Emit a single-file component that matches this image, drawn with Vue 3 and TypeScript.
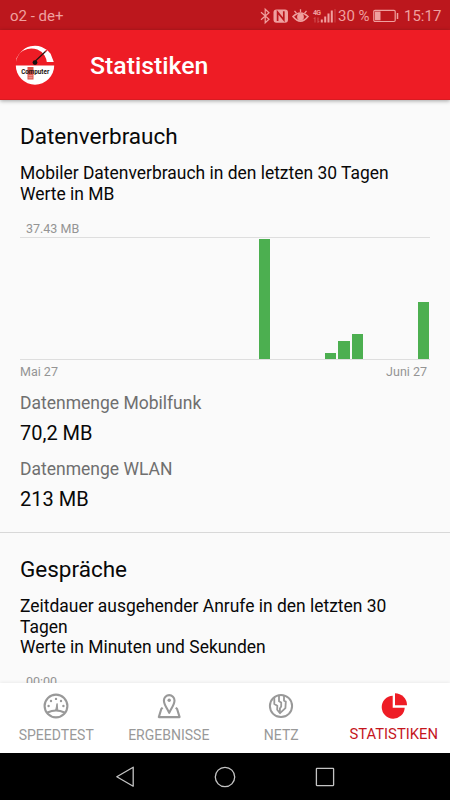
<script setup lang="ts">
interface Metric {
  label: string
  value: string
}

interface Tab {
  id: string
  label: string
  active?: boolean
}

const dayCount = 31
const usage: Record<number, number> = { 18: 120, 23: 5.7, 24: 18, 25: 24.6, 30: 56.7 }
const bars: number[] = Array.from({ length: dayCount }, (_, day) => usage[day] ?? 0)

const metrics: Metric[] = [
  { label: 'Datenmenge Mobilfunk', value: '70,2 MB' },
  { label: 'Datenmenge WLAN', value: '213 MB' },
]

const tabs: Tab[] = [
  { id: 'speed', label: 'SPEEDTEST' },
  { id: 'results', label: 'ERGEBNISSE' },
  { id: 'net', label: 'NETZ' },
  { id: 'stats', label: 'STATISTIKEN', active: true },
]
</script>

<template>
  <div class="screen">
    <div class="status">
      <span class="carrier">o2 - de+</span>
      <svg class="status-icons" width="76" height="18" viewBox="0 0 76 18">
        <path d="M1 5.2 9 12.2 5.2 15.8V2.2L9 5.8 1 12.8" fill="none" stroke="currentColor" stroke-width="1.2" />
        <rect x="13.5" y="2.5" width="14.5" height="13.2" rx="3" fill="currentColor" />
        <path d="M17.6 14V5.2L23.8 12.8V4.2" fill="none" stroke="#bc171d" stroke-width="1.7" />
        <path d="M33 9.5Q40.5 2.5 48 9.5Q40.5 18.8 33 9.5Z" fill="none" stroke="currentColor" stroke-width="1.6" />
        <circle cx="40.5" cy="10" r="3.4" fill="currentColor" />
        <path d="M34.5 3.9 36.5 6.4M40.5 2.2v3M46.5 3.9 44.5 6.4" stroke="currentColor" stroke-width="1.3" />
        <text x="53" y="7.5" font-size="7" font-weight="700" fill="currentColor" textLength="8">4G</text>
        <path d="M55 15.5V10.5M53.8 12l1.2-1.5M58 10.5v5M59.2 14 58 15.5" stroke="currentColor" stroke-width=".9" opacity=".5" />
        <path d="M61.8 15.5v-3M65.2 15.5V9.5M68.5 15.5V6.5M71.8 15.5V3.5" stroke="currentColor" stroke-width="2" />
        <path d="M75 15.5V2" stroke="currentColor" stroke-width="1.6" opacity=".22" />
      </svg>
      <span class="percent">30 %</span>
      <svg class="battery" width="26" height="14" viewBox="0 0 26 14">
        <rect x=".8" y="1.3" width="21.4" height="11.2" rx="1.2" fill="none" stroke="currentColor" stroke-width="1.2" />
        <rect x="2" y="2.5" width="5.5" height="8.8" fill="currentColor" />
        <path d="M24.5 4v6" stroke="currentColor" stroke-width="1.5" />
      </svg>
      <span class="clock">15:17</span>
    </div>

    <header class="toolbar">
      <svg class="logo" width="40" height="42" viewBox="0 0 40 42">
        <path d="M1 19A19.2 19.2 0 0 1 35.6 10.8L38.8 19H31.8Q31.6 16.2 29.6 12.6A15.2 13.5 0 0 0 1 19Z" fill="#fff" />
        <path d="M.8 22.5H39.2A19.2 19.2 0 0 1 .8 22.5Z" fill="#fff" />
        <path d="M19.3 19 31 8" stroke="#24130f" stroke-width="1.2" />
        <path d="m30.4 8.6 3.6-3.4" stroke="#ee1c25" stroke-width="1.1" />
        <circle cx="20" cy="19.6" r="2.4" fill="#17110f" />
        <rect x="12.5" y="24" width="6" height="12.5" fill="#dd5148" />
        <text x="6.2" y="30.6" font-size="7.4" font-weight="700" fill="#17110f" textLength="28" lengthAdjust="spacingAndGlyphs">Computer</text>
        <path d="M13.4 32.8h4.2M13.4 34.8h4.2" stroke="#fff" stroke-width=".8" opacity=".65" />
      </svg>
      <h1>Statistiken</h1>
    </header>

    <main class="content">
      <section class="section">
        <h2>Datenverbrauch</h2>
        <p>Mobiler Datenverbrauch in den letzten 30 Tagen<br />Werte in MB</p>
        <div class="maximum">37.43 MB</div>
        <div class="chart">
          <div v-for="(height, day) in bars" :key="day" class="bar" :style="{ height: height + 'px' }"></div>
        </div>
        <div class="range"><span>Mai 27</span><span>Juni 27</span></div>
        <dl>
          <template v-for="metric in metrics" :key="metric.label">
            <dt>{{ metric.label }}</dt>
            <dd>{{ metric.value }}</dd>
          </template>
        </dl>
      </section>
      <section class="section calls">
        <h2>Gespräche</h2>
        <p>Zeitdauer ausgehender Anrufe in den letzten 30 Tagen<br />Werte in Minuten und Sekunden</p>
        <div class="maximum">00:00</div>
      </section>
    </main>

    <nav class="tabs">
      <div v-for="tab in tabs" :key="tab.id" class="tab" :class="{ active: tab.active }">
        <svg width="28" height="28" viewBox="0 0 28 28">
          <g v-if="tab.id === 'speed'">
            <circle cx="14" cy="14" r="11.4" fill="none" stroke="currentColor" stroke-width="2.1" />
            <path d="M5.5 20.4Q14 16.6 22.5 20.4" fill="none" stroke="currentColor" stroke-width="2.2" />
            <path d="m13.6 18.5 1.5-7 .7 7Z" fill="currentColor" stroke="currentColor" stroke-width="1" />
            <g fill="currentColor">
              <circle cx="6.6" cy="14" r="1.2" /><circle cx="9" cy="9" r="1.2" /><circle cx="14" cy="6.9" r="1.2" />
              <circle cx="19" cy="9" r="1.2" /><circle cx="21.4" cy="14" r="1.2" />
            </g>
          </g>
          <g v-else-if="tab.id === 'results'" fill="none" stroke="currentColor" stroke-width="2.1" stroke-linejoin="round">
            <path d="M14.2 20.8C12 16 8.9 12.5 8.9 8.4a5.3 5.3 0 0 1 10.6 0c0 4.1-3.1 7.6-5.3 12.4Z" />
            <circle cx="14.2" cy="8.2" r="1.7" fill="currentColor" stroke="none" />
            <path d="M7.6 15.6 6.3 17 3.8 25.1H24.6L22.1 17 20.8 15.6" />
          </g>
          <g v-else-if="tab.id === 'net'" fill="none" stroke="currentColor" stroke-width="1.8" stroke-linejoin="round">
            <circle cx="14" cy="14" r="11.1" stroke-width="2" />
            <path d="M7.3 5.4 7.3 12 10.3 13.8 10.2 17.8 13 21.2 18.4 16.2 18.8 9.6 17 8.6V4" />
            <path d="M12 3.8V9.2L14.2 10.6V14.4L12.9 16.4V20" />
          </g>
          <g v-else fill="currentColor">
            <path d="M12.7 3.7V15.7H24.7A11.5 11.5 0 1 1 12.7 3.7Z" />
            <path d="M15 1.3A12 12 0 0 1 27 13.3H15Z" />
          </g>
        </svg>
        <span>{{ tab.label }}</span>
      </div>
    </nav>

    <div class="system">
      <svg width="24" height="24" viewBox="0 0 24 24"><path d="M20.2 2.2V21.2L3.8 11.7Z" /></svg>
      <svg width="24" height="24" viewBox="0 0 24 24"><circle cx="12" cy="12" r="9.7" /></svg>
      <svg width="24" height="24" viewBox="0 0 24 24"><rect x="3.4" y="3.4" width="17.2" height="17.2" rx=".5" /></svg>
    </div>
  </div>
</template>

<style>
body {
  margin: 0;
}
</style>

<style scoped>
.screen {
  display: flex;
  flex-direction: column;
  width: 450px;
  height: 800px;
  overflow: hidden;
  background: #fafafa;
  color: #080808;
  font-family: Roboto, "Liberation Sans", sans-serif;
}
svg {
  display: block;
  flex: none;
}
.status {
  flex: none;
  display: flex;
  align-items: center;
  height: 30px;
  box-sizing: border-box;
  padding: 1px 9px 0 10px;
  background: #bc171d;
  color: #efa09f;
  font-size: 15px;
  line-height: 30px;
  white-space: nowrap;
}
.carrier {
  flex: 1;
}
.status-icons {
  margin-right: 2px;
}
.percent {
  width: 35px;
}
.clock {
  width: 37px;
  margin-left: 5px;
}
.toolbar {
  flex: none;
  display: flex;
  align-items: center;
  height: 70px;
  box-sizing: border-box;
  padding-left: 15px;
  background: #ee1c25;
  border-bottom: 1px solid #d91a21;
  box-shadow: 0 1px 4px rgba(0, 0, 0, 0.35);
  z-index: 1;
}
.logo {
  margin-bottom: 1px;
}
h1 {
  margin: 3px 0 0 35px;
  color: #fff;
  font-size: 24.8px;
  font-weight: 500;
  line-height: 30px;
}
.content {
  flex: 1;
  min-height: 0;
  overflow: hidden;
}
.section {
  padding: 22px 20px 0;
}
h2 {
  margin: 0;
  font-size: 22.5px;
  font-weight: 400;
  line-height: 28px;
}
p {
  margin: 13px 0 0;
  font-size: 17.44px;
  line-height: 20.5px;
}
.maximum {
  padding: 17px 0 0 6px;
  height: 33px;
  box-sizing: border-box;
  color: #949494;
  font-size: 12.5px;
  line-height: 16px;
}
.chart {
  display: grid;
  grid-template-columns: repeat(31, 11.3px);
  gap: 1.98px;
  align-items: end;
  height: 123px;
  box-sizing: border-box;
  border-top: 1px solid #dedede;
  border-bottom: 1px solid #dedede;
}
.bar {
  background: #4caf50;
}
.range {
  display: flex;
  justify-content: space-between;
  padding: 4px 3px 0 0;
  color: #949494;
  font-size: 12.5px;
  line-height: 16px;
}
dl {
  margin: 11px 0 0;
}
dt {
  color: #6f6f6f;
  font-size: 17.5px;
  line-height: 24px;
}
dd {
  margin: 4px 0 10px;
  font-size: 20px;
  line-height: 28px;
}
.calls {
  margin-top: 19px;
  border-top: 1px solid #d8d8d8;
}
.calls .maximum {
  padding-top: 16px;
}
.tabs {
  flex: none;
  display: grid;
  grid-template-columns: repeat(4, 112.5px);
  height: 70px;
  box-sizing: border-box;
  background: #fff;
  box-shadow: 0 -1px 3px rgba(0, 0, 0, 0.06);
}
.tab {
  display: flex;
  flex-direction: column;
  align-items: center;
  padding-top: 9px;
  color: #999;
  font-size: 14px;
  line-height: 20px;
  white-space: nowrap;
}
.tab span {
  margin-top: 5px;
}
.active {
  color: #ee1c25;
}
.active span {
  margin-top: 4px;
  color: #c5161d;
  font-size: 14.8px;
}
.system {
  flex: none;
  display: flex;
  justify-content: center;
  align-items: center;
  gap: 76px;
  height: 47px;
  background: #000;
}
.system svg {
  fill: none;
  stroke: #c4c4c4;
  stroke-width: 1.3;
  stroke-linejoin: round;
}
</style>
